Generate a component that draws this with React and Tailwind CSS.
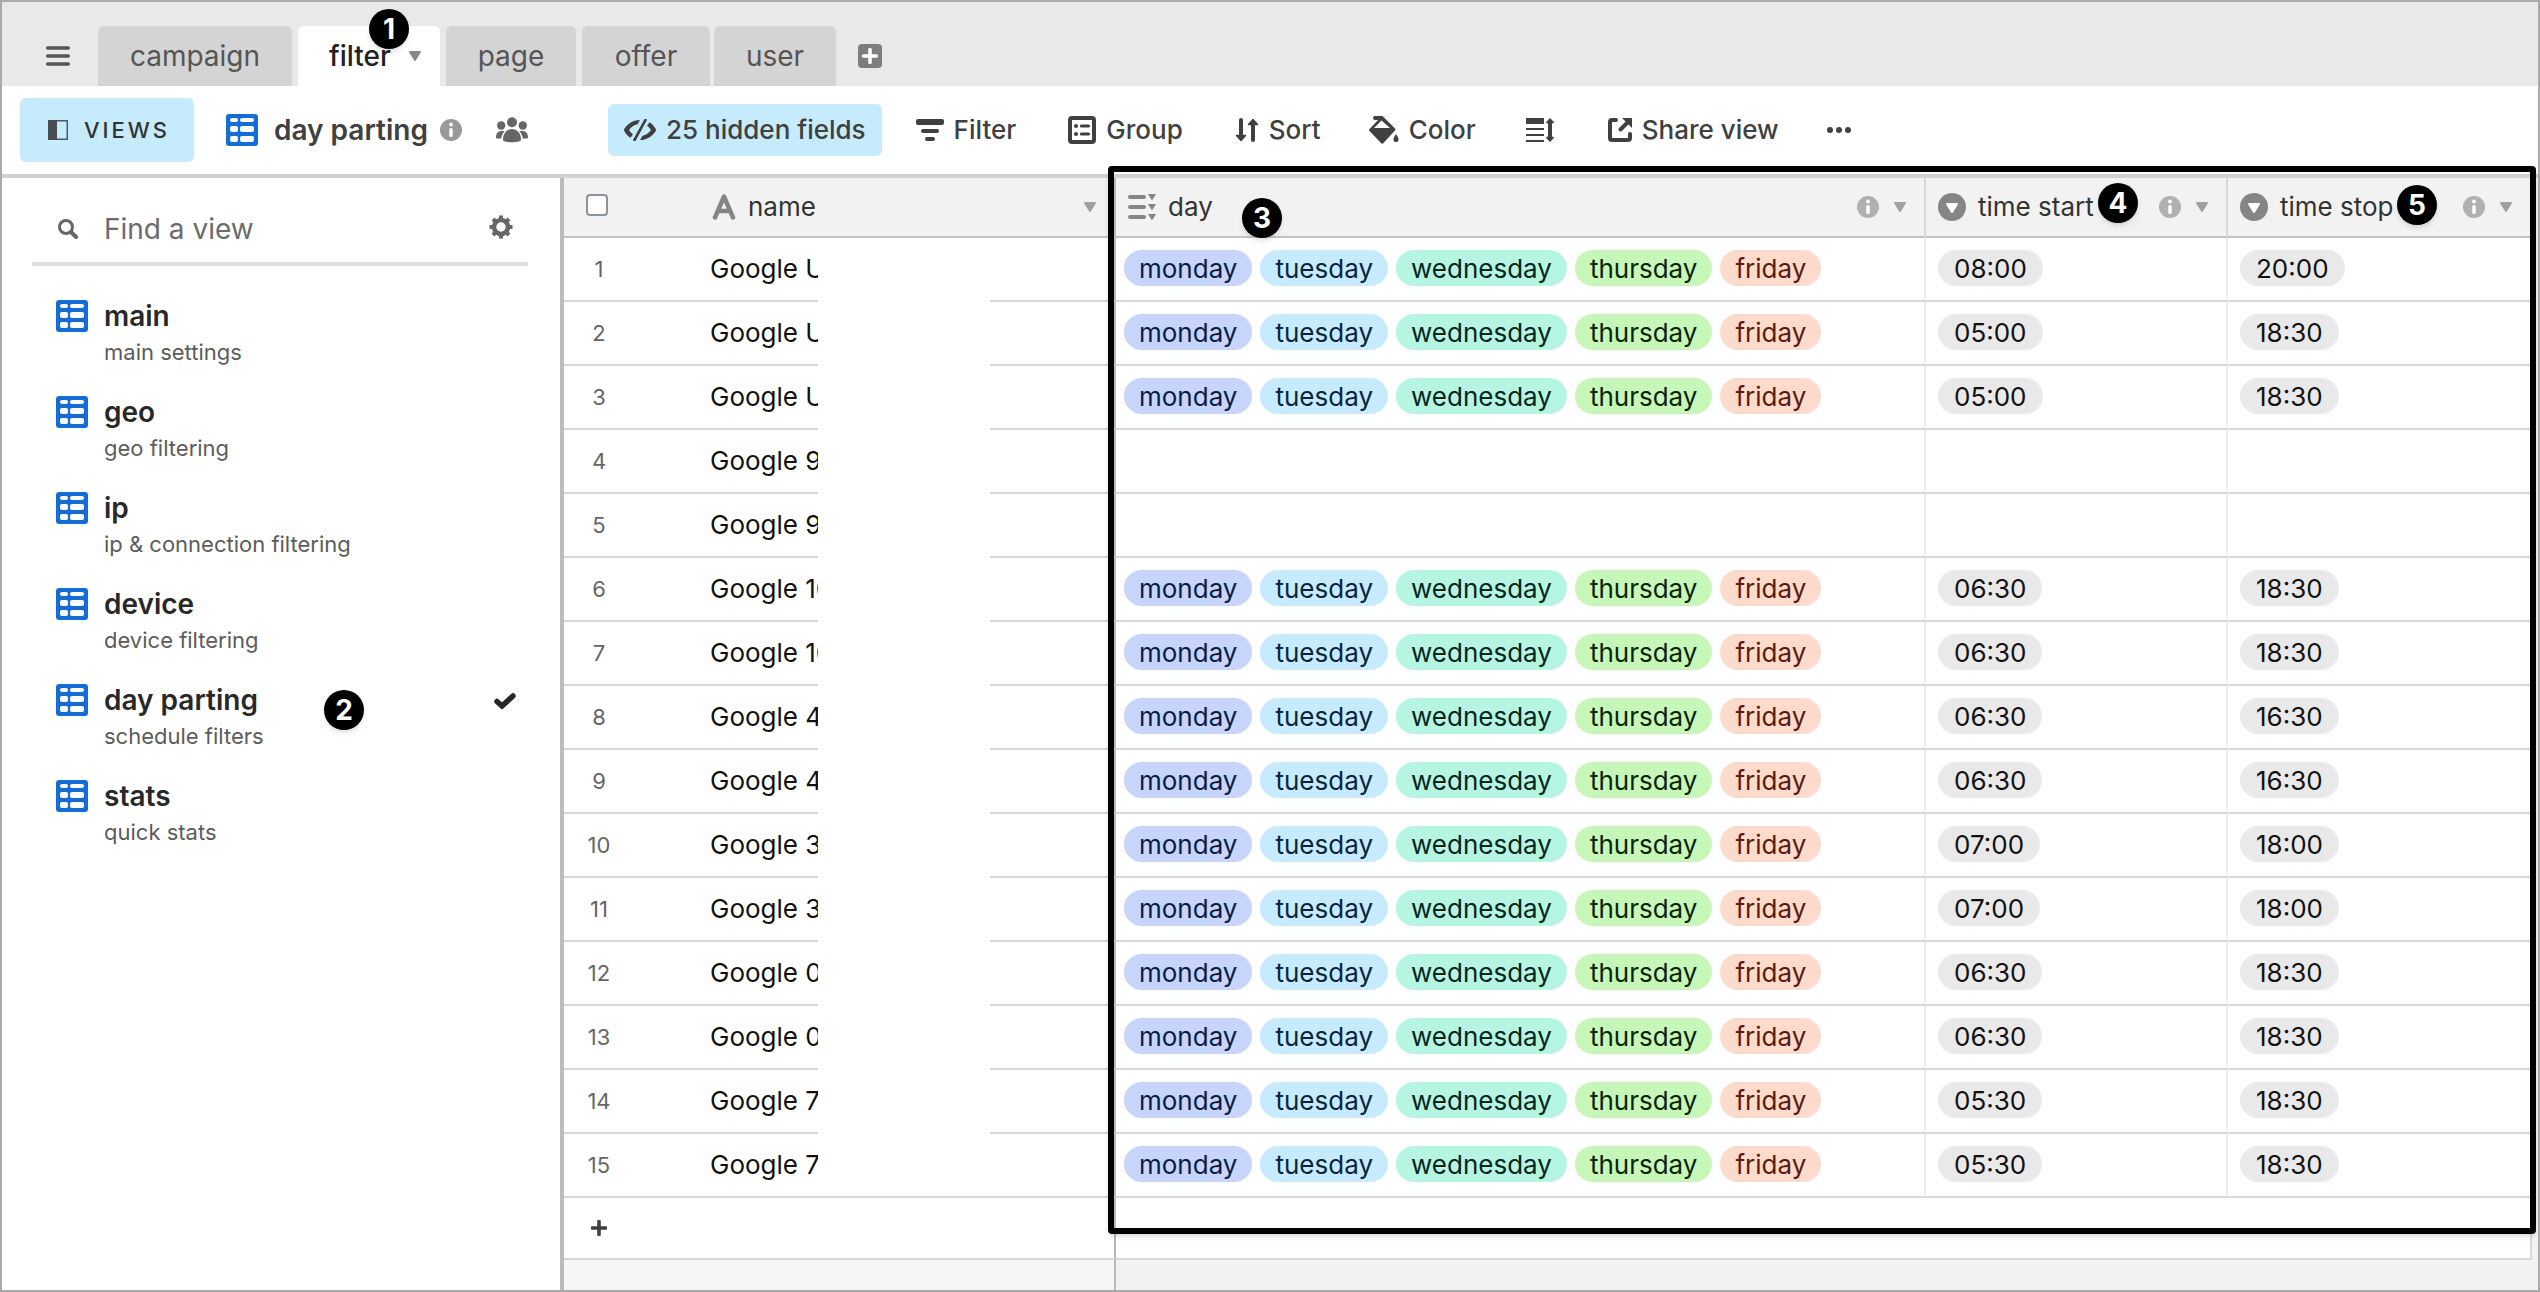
import React from "react";

const DAYS = [
  ["monday", "bg-[#c6d4fe] text-[#0b1d44]"],
  ["tuesday", "bg-[#c6ebfc] text-[#0a2540]"],
  ["wednesday", "bg-[#b7f5e3] text-[#06251f]"],
  ["thursday", "bg-[#c7f7b8] text-[#0b2409]"],
  ["friday", "bg-[#fcdacc] text-[#5c1a0e]"],
];

const ROWS = [
  ["Google U", "08:00", "20:00"],
  ["Google U", "05:00", "18:30"],
  ["Google U", "05:00", "18:30"],
  ["Google 9", "", ""],
  ["Google 9", "", ""],
  ["Google 10", "06:30", "18:30"],
  ["Google 10", "06:30", "18:30"],
  ["Google 4", "06:30", "16:30"],
  ["Google 4", "06:30", "16:30"],
  ["Google 3", "07:00", "18:00"],
  ["Google 3", "07:00", "18:00"],
  ["Google 0", "06:30", "18:30"],
  ["Google 0", "06:30", "18:30"],
  ["Google 7", "05:30", "18:30"],
  ["Google 7", "05:30", "18:30"],
];

const VIEWS = [
  ["main", "main settings"],
  ["geo", "geo filtering"],
  ["ip", "ip & connection filtering"],
  ["device", "device filtering"],
  ["day parting", "schedule filters"],
  ["stats", "quick stats"],
];

function GridIcon() {
  return (
    <svg className="h-8 w-8 shrink-0" viewBox="0 0 32 32" aria-hidden="true">
      <rect y="0" width="32" height="32" rx="3" fill="#146dd6" />
      <g fill="#fff">
        <rect x="4" y="4" width="8" height="4" rx="2" />
        <rect x="14" y="4" width="14" height="4" rx="2" />
        <rect x="4" y="12" width="8" height="6" rx="2" />
        <rect x="14" y="12" width="14" height="6" rx="2" />
        <rect x="4" y="22" width="8" height="6" rx="2" />
        <rect x="14" y="22" width="14" height="6" rx="2" />
      </g>
    </svg>
  );
}

function InfoIcon({ className }) {
  return (
    <svg className={className} viewBox="0 0 22 22" aria-hidden="true">
      <circle cx="11" cy="11" r="11" fill="currentColor" />
      <circle cx="11" cy="5.5" r="1.9" fill="#fff" />
      <rect x="9.3" y="9" width="3.4" height="9" rx="1.6" fill="#fff" />
    </svg>
  );
}

function Caret({ className }) {
  return (
    <svg className={className} viewBox="0 0 12 10" aria-hidden="true">
      <path d="M1 0h10a1 1 0 0 1 .8 1.5l-5 8a1 1 0 0 1-1.6 0l-5-8A1 1 0 0 1 1 0z" fill="currentColor" />
    </svg>
  );
}

function Badge({ n, className }) {
  return (
    <span
      className={
        "absolute z-20 flex h-10 w-10 items-center justify-center rounded-full bg-black text-[28px] leading-none font-bold text-white shadow-md " +
        className
      }
    >
      {n}
    </span>
  );
}

function SelectIcon() {
  return (
    <svg className="h-7 w-7 shrink-0" viewBox="0 0 28 28" aria-hidden="true">
      <circle cx="14" cy="14" r="14" fill="#858585" />
      <path d="M9 10h10a1 1 0 0 1 .9 1.5l-5 8a1 1 0 0 1-1.8 0l-5-8A1 1 0 0 1 9 10z" fill="#fff" />
    </svg>
  );
}

function Pill({ children, className }) {
  return (
    <span className={"inline-flex h-9 items-center rounded-full pt-0.5 text-[26px] leading-8 " + className}>
      {children}
    </span>
  );
}

function ToolButton({ icon, children, className = "" }) {
  return (
    <button type="button" className={"flex items-center gap-[10px] " + className}>
      {icon}
      {children}
    </button>
  );
}

function Tab({ children, className }) {
  return (
    <button
      type="button"
      className={"flex h-[60px] items-center justify-center rounded-t-md text-[28px] leading-9 " + className}
    >
      {children}
    </button>
  );
}

function TabBar() {
  return (
    <header className="flex h-[84px] items-end bg-[#e9e9e9]">
      <button type="button" aria-label="Menu" className="mb-5 ml-[44px] h-5 w-6">
        <svg viewBox="0 0 24 20" className="h-5 w-6">
          <path d="M1.8 2h20.4M1.8 10h20.4M1.8 18h20.4" stroke="#555" strokeWidth="3.6" strokeLinecap="round" />
        </svg>
      </button>
      <Tab className="ml-7 w-[194px] bg-[#d4d4d4] text-[#555]">campaign</Tab>
      <div className="relative ml-[6px]">
        <Tab className="w-[142px] gap-[18px] bg-white pl-3 font-medium text-[#222]">
          filter
          <Caret className="h-[10px] w-3 text-[#888]" />
        </Tab>
        <Badge n="1" className="-top-[17px] left-[71px]" />
      </div>
      <Tab className="ml-[6px] w-[130px] bg-[#d4d4d4] text-[#555]">page</Tab>
      <Tab className="ml-[6px] w-[128px] bg-[#d4d4d4] text-[#555]">offer</Tab>
      <Tab className="ml-1 w-[122px] bg-[#d4d4d4] text-[#555]">user</Tab>
      <button type="button" aria-label="Add tab" className="mb-[18px] ml-[22px] h-6 w-6">
        <svg viewBox="0 0 24 24" className="h-6 w-6">
          <rect width="24" height="24" rx="4" fill="#7d7d7d" />
          <path d="M12 5.5v13M5.5 12h13" stroke="#fff" strokeWidth="3.6" strokeLinecap="round" />
        </svg>
      </button>
    </header>
  );
}

function Toolbar() {
  return (
    <div className="flex h-[92px] items-center border-b-4 border-[#d2d2d2] bg-white text-[26px] leading-8 font-medium text-[#404040]">
      <button
        type="button"
        className="ml-[18px] flex h-16 w-[174px] items-center justify-center gap-4 rounded-md bg-[#c6ebfc] pl-1 text-[22px] tracking-[3px] text-[#333]"
      >
        <svg viewBox="0 0 20 20" className="h-5 w-5">
          <rect x="0.750" y="0.750" width="18.500" height="18.500" fill="none" stroke="#50595e" strokeWidth="1.500" />
          <rect width="9" height="20" fill="#474d50" />
        </svg>
        VIEWS
      </button>
      <div className="ml-8 flex w-[382px] items-center">
        <GridIcon />
        <span className="ml-4 text-[28px] font-semibold">day parting</span>
        <InfoIcon className="ml-3 h-[22px] w-[22px] text-[#999]" />
        <svg viewBox="0 0 32 26" className="ml-[34px] h-[26px] w-8" fill="#666" aria-hidden="true">
          <circle cx="16" cy="5.200" r="5" />
          <circle cx="5.200" cy="8.500" r="4.200" />
          <circle cx="26.800" cy="8.500" r="4.200" />
          <path d="M7 23c0-7 4-11 9-11s9 4 9 11c0 1.200-4 2.300-9 2.300S7 24.200 7 23z" />
          <path d="M5 14c1.500 0 2.500 0 3.500.5C6.500 16.500 5.500 18.500 5.200 21.500H1.500C.5 21.500 0 21 0 20c0-3 2-6 5-6zM27 14c-1.500 0-2.500 0-3.500.5 2 2 3 4 3.300 7h3.700c1 0 1.500-.5 1.500-1.500 0-3-2-6-5-6z" />
        </svg>
      </div>
      <ToolButton
        className="h-[52px] rounded-md bg-[#c6ebfc] px-4"
        icon={
          <svg viewBox="0 0 32 22" className="h-[22px] w-8" fill="#404040" aria-hidden="true">
            <path d="M21.500 1 10.500 21" stroke="#404040" strokeWidth="2.600" strokeLinecap="round" />
            <path d="M16 1C10 1 4 4 .4 9.800c-.5.800-.5 1.600 0 2.400C2 15 4 17 6.500 18.700L9 15.300C7.200 14 6 12.500 5 11c2-3 5-5 8.500-5.800z" />
            <path d="M16 21c6 0 12-3 15.600-8.800.5-.8.5-1.600 0-2.400C30 7 28 5 25.500 3.300L23 6.700C24.800 8 26 9.500 27 11c-2 3-5 5-8.500 5.800z" />
          </svg>
        }
      >
        25 hidden fields
      </ToolButton>
      <ToolButton
        className="ml-[34px]"
        icon={
          <svg viewBox="0 0 28 22" className="h-[22px] w-7" fill="#404040" aria-hidden="true">
            <rect width="28" height="6" rx="2" />
            <rect x="5" y="10" width="18" height="4" rx="2" />
            <rect x="9" y="18" width="10" height="4" rx="2" />
          </svg>
        }
      >
        Filter
      </ToolButton>
      <ToolButton
        className="ml-[52px]"
        icon={
          <svg viewBox="0 0 28 28" className="h-7 w-7" aria-hidden="true">
            <rect x="2" y="2" width="24" height="24" rx="2" fill="none" stroke="#404040" strokeWidth="4" />
            <path d="M13.500 10h7M13.500 18h7" stroke="#404040" strokeWidth="3.200" strokeLinecap="round" />
            <circle cx="8" cy="10" r="2" fill="#404040" />
            <circle cx="8" cy="18" r="2" fill="#404040" />
          </svg>
        }
      >
        Group
      </ToolButton>
      <ToolButton
        className="ml-[52px]"
        icon={
          <svg viewBox="0 0 24 24" className="h-6 w-6" fill="#404040" stroke="#404040" strokeLinecap="round" strokeLinejoin="round" aria-hidden="true">
            <path d="M6 2v16M18 22V6" strokeWidth="4" />
            <path d="M1.500 17.500h9L6 22.500zM13.500 6.500h9L18 1.500z" strokeWidth="1.500" />
          </svg>
        }
      >
        Sort
      </ToolButton>
      <ToolButton
        className="ml-12"
        icon={
          <svg viewBox="0 0 30 28" className="h-7 w-[30px]" fill="#404040" aria-hidden="true">
            <path d="M6 0h7.500L26 12.500a1.500 1.500 0 0 1 0 2L14.500 27a1.500 1.500 0 0 1-2.500 0L.5 15a1.500 1.500 0 0 1 0-2L9 4H6a2 2 0 0 1 0-4z" />
            <path d="m12.500 4.500 8.500 7.500H5z" fill="#fff" />
            <path d="M27 18c1.700 2.500 2.500 4 2.500 5.500a2.500 2.500 0 0 1-5 0c0-1.500.8-3 2.500-5.500z" />
          </svg>
        }
      >
        Color
      </ToolButton>
      <button type="button" aria-label="Row height" className="ml-[50px]">
        <svg viewBox="0 0 28 24" className="h-6 w-7" aria-hidden="true">
          <rect width="18" height="6" rx="0.500" fill="#404040" />
          <path d="M0 11h18M0 17h18M0 23h18" stroke="#404040" strokeWidth="2" />
          <path d="M24 4v16" stroke="#404040" strokeWidth="4" />
          <path d="M20.800 4.500 24 1l3.200 3.500zM20.800 19.500 24 23l3.200-3.500z" stroke="#404040" strokeWidth="1.500" strokeLinejoin="round" fill="#404040" />
        </svg>
      </button>
      <ToolButton
        className="ml-[54px]"
        icon={
          <svg viewBox="0 0 24 24" className="h-6 w-6" fill="none" stroke="#404040" strokeWidth="4" strokeLinecap="round" aria-hidden="true">
            <path d="M8 2H4a2 2 0 0 0-2 2v16a2 2 0 0 0 2 2h16a2 2 0 0 0 2-2v-4" />
            <path d="m12.500 11.500 7-7" />
            <path d="M14 0h9a1 1 0 0 1 1 1v9z" fill="#404040" stroke="none" />
          </svg>
        }
      >
        Share view
      </ToolButton>
      <button type="button" aria-label="More" className="ml-12">
        <svg viewBox="0 0 24 6" className="h-[6px] w-6" fill="#404040">
          <circle cx="3" cy="3" r="3" />
          <circle cx="12" cy="3" r="3" />
          <circle cx="21" cy="3" r="3" />
        </svg>
      </button>
    </div>
  );
}

function Sidebar() {
  return (
    <aside className="w-[562px] shrink-0 border-r-4 border-[#bbb] bg-white">
      <div className="mr-8 ml-[30px] flex h-[88px] items-center border-b-4 border-[#dedede] pt-[18px]">
        <svg viewBox="0 0 20 20" className="ml-[26px] h-5 w-5" fill="none" stroke="#666" strokeLinecap="round" aria-hidden="true">
          <circle cx="8" cy="8" r="6.500" strokeWidth="3" />
          <path d="m13.500 13.500 4.500 4.500" strokeWidth="4" />
        </svg>
        <input
          type="text"
          aria-label="Find a view"
          placeholder="Find a view"
          className="ml-[26px] w-0 grow bg-transparent text-[28px] leading-9 outline-none placeholder:text-[#6b6b6b]"
        />
        <button type="button" aria-label="View settings" className="mr-[15px] mb-1">
          <svg viewBox="0 0 24 24" className="h-6 w-6" fill="none" stroke="#666" aria-hidden="true">
            <circle cx="12" cy="12" r="7" strokeWidth="4.500" />
            <path
              d="M12 0.500v4M12 19.500v4M0.500 12h4M19.500 12h4M4 4l2.500 2.500M17.500 17.500 20 20M4 20l2.500-2.500M17.500 6.500 20 4"
              strokeWidth="4"
            />
          </svg>
        </button>
      </div>
      <ul className="pt-[26px]">
        {VIEWS.map(([name, note]) => (
          <li key={name} className="relative h-24">
            <button type="button" className="flex w-full items-start pt-2 pl-[54px] text-left">
              <GridIcon />
              <span className="ml-4 grow">
                <span className="block text-[28px] leading-8 font-semibold text-[#282828]">{name}</span>
                <span className="mt-[6px] block text-[22px] leading-7 text-[#5c5c5c]">{note}</span>
              </span>
              {name === "day parting" && (
                <svg viewBox="0 0 22 16" className="mt-[9px] mr-[44px] h-4 w-[22px]" aria-hidden="true">
                  <path d="m3 8.500 5 4.500L19 3" fill="none" stroke="#282828" strokeWidth="5.500" strokeLinecap="round" />
                </svg>
              )}
            </button>
            {name === "day parting" && <Badge n="2" className="top-[14px] left-[322px]" />}
          </li>
        ))}
      </ul>
    </aside>
  );
}

function HeaderCell({ icon, label, info, badge, className }) {
  return (
    <th className={"relative h-[60px] border-r-2 border-b-2 border-b-[#c4c4c4] p-0 pr-[18px] font-normal " + className}>
      <div className="flex items-center">
        {icon}
        <span className="ml-3 grow text-left">{label}</span>
        {info && <InfoIcon className="mr-[15px] h-[22px] w-[22px] text-[#b0b0b0]" />}
        <Caret className="h-[10px] w-3 text-[#a0a0a0]" />
      </div>
      {badge}
    </th>
  );
}

function DataGrid() {
  return (
    <main className="flex grow flex-col bg-[#f2f2f2]">
      <div className="relative mr-[6px]">
        <table className="w-full table-fixed border-separate border-spacing-0 bg-white text-[26px] leading-8 text-[#111]">
          <colgroup>
            <col className="w-[70px]" />
            <col className="w-[482px]" />
            <col />
            <col className="w-[302px]" />
            <col className="w-[304px]" />
          </colgroup>
          <thead className="bg-[#f2f2f2] text-[#333]">
            <tr>
              <th className="border-b-2 border-[#c4c4c4] p-0">
                <input
                  type="checkbox"
                  aria-label="Select all rows"
                  className="mb-1 ml-[22px] block h-[22px] w-[22px] appearance-none rounded border-2 border-[#8a949c] bg-white"
                />
              </th>
              <HeaderCell
                className="border-r-[#b8b8b8] pl-[78px]"
                label="name"
                icon={
                  <svg viewBox="0 0 24 26" className="h-[26px] w-6" fill="none" stroke="#858585" strokeWidth="4.500" strokeLinecap="round" strokeLinejoin="round" aria-hidden="true">
                    <path d="M3 23.500 12 2.500l9 21M6.500 17h11" />
                  </svg>
                }
              />
              <HeaderCell
                className="border-r-[#d5d9dc] pl-3"
                label="day"
                info
                badge={<Badge n="3" className="top-[20px] left-[126px]" />}
                icon={
                  <svg viewBox="0 0 28 26" className="h-[26px] w-7" aria-hidden="true" fill="#858585">
                    <rect y="1" width="18" height="4" rx="2" />
                    <rect y="11" width="18" height="4" rx="2" />
                    <rect y="21" width="18" height="4" rx="2" />
                    <path d="M20 0h8l-4 6.500zM20 10h8l-4 6.500zM20 20h8l-4 6.500z" />
                  </svg>
                }
              />
              <HeaderCell
                className="border-r-[#d5d9dc] pl-3"
                label="time start"
                info
                badge={<Badge n="4" className="top-[5px] left-[172px]" />}
                icon={<SelectIcon />}
              />
              <HeaderCell
                className="border-r-[#d5d9dc] pl-3"
                label="time stop"
                info
                badge={<Badge n="5" className="top-[7px] left-[169px]" />}
                icon={<SelectIcon />}
              />
            </tr>
          </thead>
          <tbody>
            {ROWS.map(([name, start, stop], i) => (
              <tr key={i}>
                <td className="h-16 border-b-2 border-[#d5d9dc] p-0 text-center text-[22px] text-[#666]">{i + 1}</td>
                <td className="border-r-2 border-b-2 border-r-[#b8b8b8] border-b-[#d5d9dc] p-0 pl-[76px] whitespace-nowrap">
                  {name}
                </td>
                <td className="border-r-2 border-b-2 border-r-[#ececec] border-b-[#d5d9dc] p-0 pl-2">
                  {start && (
                    <div className="flex gap-2 pb-0.5">
                      {DAYS.map(([day, tone]) => (
                        <Pill key={day} className={"px-[15px] " + tone}>{day}</Pill>
                      ))}
                    </div>
                  )}
                </td>
                <td className="border-r-2 border-b-2 border-r-[#ececec] border-b-[#d5d9dc] p-0 pl-3">
                  {start && <div className="flex pb-0.5"><Pill className="bg-[#e9e9e9] px-4 text-[#111]">{start}</Pill></div>}
                </td>
                <td className="border-r-2 border-b-2 border-[#d5d9dc] p-0 pl-3">
                  {stop && <div className="flex pb-0.5"><Pill className="bg-[#e9e9e9] px-4 text-[#111]">{stop}</Pill></div>}
                </td>
              </tr>
            ))}
            <tr>
              <td className="h-[62px] border-b-2 border-[#d5d9dc] p-0">
                <button type="button" aria-label="Add row" className="mx-auto block h-4 w-4">
                  <svg viewBox="0 0 16 16" className="h-4 w-4">
                    <path d="M8 1.500v13M1.500 8h13" stroke="#404040" strokeWidth="3.600" strokeLinecap="round" />
                  </svg>
                </button>
              </td>
              <td className="border-r-2 border-b-2 border-r-[#b8b8b8] border-b-[#d5d9dc]" />
              <td colSpan={3} className="border-r-2 border-b-2 border-[#d5d9dc]" />
            </tr>
          </tbody>
        </table>
        <div className="absolute top-[60px] bottom-[64px] left-[254px] w-[172px] bg-white" />
        <div className="pointer-events-none absolute -top-3 -right-1 bottom-[26px] left-[544px] z-10 rounded-sm border-[6px] border-black shadow-md" />
      </div>
      <div className="flex grow">
        <div className="w-[552px] border-r-2 border-[#b8b8b8] bg-[#f6f6f6]" />
      </div>
    </main>
  );
}

export default function App() {
  return (
    <div className="flex min-h-screen flex-col border-2 border-[#aaa] bg-white font-['Inter',sans-serif]">
      <TabBar />
      <Toolbar />
      <div className="flex grow">
        <Sidebar />
        <DataGrid />
      </div>
    </div>
  );
}
